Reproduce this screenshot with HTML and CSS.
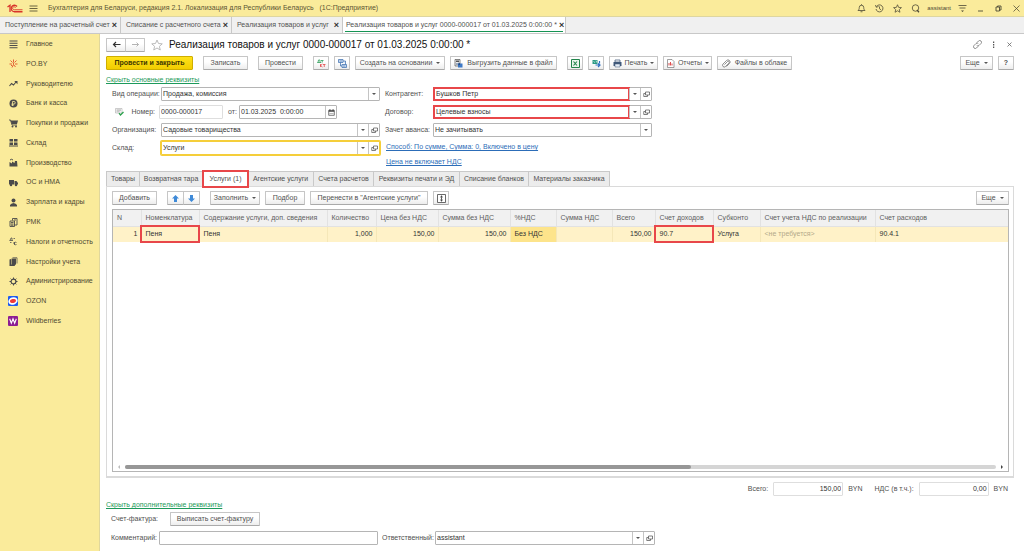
FILE: index.html
```html
<!DOCTYPE html>
<html lang="ru">
<head>
<meta charset="utf-8">
<title>Реализация товаров и услуг</title>
<link rel="stylesheet" href="styles.css">
</head>
<body>
<svg class="sprite" aria-hidden="true">
  <symbol id="open" viewBox="0 0 14 14"><path d="M5 2h8v6H5zM5 5H1.500v6H9V8" fill="none" stroke="#555" stroke-width="1.500"/></symbol>
  <symbol id="star" viewBox="0 0 24 24"><path d="M12 2l3 7 7.500.7-5.700 5 1.700 7.300L12 18l-6.500 4 1.700-7.300-5.700-5L9 9z" fill="none" stroke="currentColor" stroke-width="2" stroke-linejoin="round"/></symbol>
</svg>

<header class="topbar">
  <svg class="logo" viewBox="0 0 32 18"><g fill="none" stroke="#d8342b" stroke-width="2.600"><path d="M1 6l5-3.500V16"/><path d="M20 5a6.500 6.500 0 1 0-5 10.500h16"/><path d="M17 7.500a3 3 0 1 0-2 4h16" stroke-width="1.800"/></g></svg>
  <button class="icon-btn" aria-label="Меню"><svg class="ico" viewBox="0 0 18 18"><path d="M1 4h16M1 9h16M1 14h16" stroke="#6b6440" stroke-width="2"/></svg></button>
  <span class="app-title">Бухгалтерия для Беларуси, редакция 2.1. Локализация для Республики Беларусь &nbsp; (1С:Предприятие)</span>
  <div class="top-tools">
    <button class="icon-btn" aria-label="Уведомления"><svg class="ico" viewBox="0 0 18 18"><path d="M2 13c2-2 2.500-3 2.500-6a4.500 4.500 0 0 1 9 0c0 3 .5 4 2.500 6zM7 15.500h4M9 .5v2" fill="none" stroke="#4d4935" stroke-width="1.600"/></svg></button>
    <button class="icon-btn" aria-label="История"><svg class="ico" viewBox="0 0 18 18"><path d="M3 5a7 7 0 1 1-1 5M1 2l1.500 4.500L7 5M9 5v4.500l3 2" fill="none" stroke="#4d4935" stroke-width="1.600"/></svg></button>
    <button class="icon-btn" aria-label="Избранное"><svg class="ico"><use href="#star"/></svg></button>
    <button class="icon-btn" aria-label="Поиск"><svg class="ico" viewBox="0 0 18 18"><circle cx="9" cy="8" r="6.500" fill="none" stroke="#4d4935" stroke-width="1.600"/><path d="M12 12l4 4.500" stroke="#4d4935" stroke-width="2.500"/></svg></button>
    <span class="user">assistant</span>
    <button class="icon-btn" aria-label="Настройки"><svg class="ico" viewBox="0 0 18 18"><path d="M1 3h16M3 8h12" stroke="#4d4935" stroke-width="1.600"/><path d="M6 13h6l-3 3z" fill="#4d4935"/></svg></button>
    <button class="icon-btn" aria-label="Свернуть"><svg class="ico" viewBox="0 0 18 18"><path d="M4 14h10" stroke="#4d4935" stroke-width="1.800"/></svg></button>
    <button class="icon-btn" aria-label="Развернуть"><svg class="ico" viewBox="0 0 18 18"><path d="M4 6h7v8H4zM7 6V4h7v8h-3" fill="none" stroke="#4d4935" stroke-width="1.800"/></svg></button>
    <button class="icon-btn" aria-label="Закрыть"><svg class="ico" viewBox="0 0 18 18"><path d="M3 3l12 12M15 3L3 15" stroke="#4d4935" stroke-width="1.500"/></svg></button>
  </div>
</header>

<nav class="windows">
  <a href="#" class="w1">Поступление на расчетный счет<b>×</b></a>
  <a href="#" class="w2">Списание с расчетного счета<b>×</b></a>
  <a href="#" class="w2">Реализация товаров и услуг<b>×</b></a>
  <a href="#" class="w3 current">Реализация товаров и услуг 0000-000017 от 01.03.2025 0:00:00 *<b>×</b></a>
</nav>

<div class="shell">
  <nav class="sidebar">
    <ul>
      <li><a href="#"><svg class="ico" viewBox="0 0 18 18"><path d="M1 2h16M1 6.500h16M1 11h16M1 15.500h16" stroke="#4b4b4b" stroke-width="2.400"/></svg>Главное</a></li>
      <li><a href="#"><svg class="ico" viewBox="0 0 18 18"><path d="M9 1v5M3 3l4 4M15 3l-4 4M1 10h5M12 10h5M9 7v4l-3 6M9 11l4 5M4 14l2-2" stroke="#e2582f" stroke-width="1.900" fill="none"/></svg>PO.BY</a></li>
      <li><a href="#"><svg class="ico" viewBox="0 0 18 18"><path d="M1 14l4-5 4 3 5-6" fill="none" stroke="#4b4b4b" stroke-width="2.200"/><path d="M10.500 4H17v6.500z" fill="#4b4b4b"/></svg>Руководителю</a></li>
      <li><a href="#"><svg class="ico" viewBox="0 0 18 18"><circle cx="9" cy="9" r="8" fill="#4b4b4b"/><path d="M7 14V5h3a2.500 2.500 0 0 1 0 5H5M5 12h5" fill="none" stroke="#faeb9b" stroke-width="1.600"/></svg>Банк и касса</a></li>
      <li><a href="#"><svg class="ico" viewBox="0 0 18 18"><path d="M3 3h15l-2 7H6z" fill="#4b4b4b"/><path d="M0 2h3l3 10h10" fill="none" stroke="#4b4b4b" stroke-width="1.800"/><circle cx="7" cy="15" r="2" fill="#4b4b4b"/><circle cx="14" cy="15" r="2" fill="#4b4b4b"/></svg>Покупки и продажи</a></li>
      <li><a href="#"><svg class="ico" viewBox="0 0 18 18"><path d="M1 2h7v5H1zM10 2h7v5h-7zM1 9h7v5H1zM10 9h7v5h-7zM0 15h18v2H0z" fill="#4b4b4b"/></svg>Склад</a></li>
      <li><a href="#"><svg class="ico" viewBox="0 0 18 18"><path d="M1 17V8l5 3V7l5 3 1-4h4l1 11z" fill="#4b4b4b"/><path d="M2 4q3-3 6 0" fill="none" stroke="#4b4b4b" stroke-width="2"/></svg>Производство</a></li>
      <li><a href="#"><svg class="ico" viewBox="0 0 18 18"><path d="M0 4h10v9H0zM11 6h4l3 4v3h-7z" fill="#4b4b4b"/><circle cx="4" cy="14" r="2.500" fill="#4b4b4b"/><circle cx="14" cy="14" r="2.500" fill="#4b4b4b"/></svg>ОС и НМА</a></li>
      <li><a href="#"><svg class="ico" viewBox="0 0 18 18"><circle cx="9" cy="5" r="4" fill="#4b4b4b"/><path d="M2 17v-3q2-3 7-4 5 1 7 4v3z" fill="#4b4b4b"/></svg>Зарплата и кадры</a></li>
      <li><a href="#"><svg class="ico" viewBox="0 0 18 18"><path d="M2 6h9v11H2zM7 5V1h9v13h-5M4 9h5M4 12h5M4 14.500h5M10 4h4" fill="none" stroke="#4b4b4b" stroke-width="1.800"/></svg>РМК</a></li>
      <li><a href="#"><svg class="ico" viewBox="0 0 18 18"><path d="M2 7l2-5h2v5M1 7h7M9 3h3M8 12h4M11 10v6M15 11a2.500 2.500 0 1 0 0 4M2 11h3" fill="none" stroke="#4b4b4b" stroke-width="1.500"/></svg>Налоги и отчетность</a></li>
      <li><a href="#"><svg class="ico" viewBox="0 0 18 18"><path d="M1 5l3-1v11h9l-2 3H1zM5 3h9v12H5z" fill="#4b4b4b"/><path d="M7 1.500h9V13" fill="none" stroke="#4b4b4b" stroke-width="1.500"/></svg>Настройки учета</a></li>
      <li><a href="#"><svg class="ico" viewBox="0 0 18 18"><circle cx="9" cy="9" r="4.800" fill="none" stroke="#4b4b4b" stroke-width="2.400"/><path d="M9 1v3M9 14v3M1 9h3M14 9h3M3.300 3.300l2 2M12.700 12.700l2 2M3.300 14.700l2-2M12.700 5.300l2-2" stroke="#4b4b4b" stroke-width="2"/></svg>Администрирование</a></li>
      <li><a href="#"><svg class="ico brand" viewBox="0 0 18 18"><rect width="18" height="18" rx="2" fill="#1f5cf0"/><ellipse cx="9" cy="9" rx="8.500" ry="6.500" fill="#fff" transform="rotate(-20 9 9)"/><ellipse cx="9" cy="9" rx="5.500" ry="3.500" fill="#f03a3a" transform="rotate(-15 9 9)"/></svg>OZON</a></li>
      <li><a href="#"><svg class="ico brand" viewBox="0 0 18 18"><rect width="18" height="18" rx="2" fill="#8c1d93"/><path d="M3 5l3 8 3-8 3 8 3-8" fill="none" stroke="#fff" stroke-width="2"/></svg>Wildberries</a></li>
    </ul>
  </nav>

  <main class="doc">
    <div class="heading">
      <div class="pair">
        <button class="btn" aria-label="Назад"><svg class="ico" viewBox="0 0 18 18"><path d="M17 9H4M8 4L3 9l5 5" fill="none" stroke="#333" stroke-width="2.400"/></svg></button>
        <button class="btn" aria-label="Вперед"><svg class="ico" viewBox="0 0 18 18"><path d="M2 9h13M11 5l4 4-4 4" fill="none" stroke="#aaa" stroke-width="1.800"/></svg></button>
      </div>
      <svg class="fav"><use href="#star"/></svg>
      <h1>Реализация товаров и услуг 0000-000017 от 01.03.2025 0:00:00 *</h1>
      <div class="heading-tools">
        <button class="icon-btn" aria-label="Ссылка"><svg class="ico" viewBox="0 0 18 18"><path d="M8 5l3-3a3.300 3.300 0 0 1 5 5l-4 4a3.300 3.300 0 0 1-4.500 0M10 13l-3 3a3.300 3.300 0 0 1-5-5l4-4a3.300 3.300 0 0 1 4.500 0" fill="none" stroke="#555" stroke-width="1.300"/></svg></button>
        <button class="icon-btn" aria-label="Еще"><svg class="ico" viewBox="0 0 18 18"><path d="M8 3h2.500v3H8zM8 8h2.500v3H8zM8 13h2.500v3H8z" fill="#555"/></svg></button>
        <button class="icon-btn" aria-label="Закрыть"><svg class="ico" viewBox="0 0 18 18"><path d="M5 5l8 8M13 5l-8 8" stroke="#666" stroke-width="1.600"/></svg></button>
      </div>
    </div>

    <div class="commands">
      <button class="btn primary">Провести и закрыть</button>
      <button class="btn wide">Записать</button>
      <button class="btn wide">Провести</button>
      <div class="group">
        <button class="btn sq" aria-label="Движения"><svg class="ico" viewBox="0 0 18 18"><path d="M2 7l1-5h3v5M1 8V7h7v1M8 3h5M10.500 3v4" fill="none" stroke="#2f9e5b" stroke-width="1.600"/><path d="M7 10v6M11 10l-4 3 4 3M12 11h5M14.500 11v5" fill="none" stroke="#e04848" stroke-width="1.600"/></svg></button>
        <button class="btn sq" aria-label="Структура"><svg class="ico" viewBox="0 0 18 18"><path d="M1 1h9v6H1zM8 11h9v6H8zM5 7v7h3M10 4h5v7" fill="#dce8f8" stroke="#3d70b0" stroke-width="1.500"/><path d="M3 4h5M10 14h5" stroke="#3d70b0" stroke-width="1.500"/></svg></button>
        <button class="btn create">Создать на основании<i class="caret"></i></button>
        <button class="btn export"><svg class="ico" viewBox="0 0 18 18"><path d="M2 1h10v13H2z" fill="#eee" stroke="#555" stroke-width="1.400"/><path d="M4 3h6v3H4z" fill="#555"/><path d="M8 9h9v8H8z" fill="#3d79c6"/><path d="M4 10h7M9 8l3 2-3 2" fill="none" stroke="#173f77" stroke-width="1.500"/></svg>Выгрузить данные в файл</button>
      </div>
      <div class="group">
        <button class="btn sq" aria-label="Excel"><svg class="ico" viewBox="0 0 18 18"><path d="M1 1h16v16H1z" fill="#eaf6ee" stroke="#21834a" stroke-width="2"/><path d="M5 5l7 8M12 5l-7 8" stroke="#21834a" stroke-width="2.200"/></svg></button>
        <button class="btn sq" aria-label="Обмен"><svg class="ico" viewBox="0 0 18 18"><path d="M1 2h10v8H1z" fill="#2a9a83"/><path d="M3 4l3 4M7 4h2v3" stroke="#fff" fill="none"/><path d="M7 12h8M12 9l4 3-4 4M15 4v5" fill="none" stroke="#2e6fc0" stroke-width="2.400"/></svg></button>
        <button class="btn print"><svg class="ico" viewBox="0 0 18 18"><path d="M4 2h10v4H4z" fill="#fff" stroke="#40597a" stroke-width="1.500"/><path d="M1 6h16v8H1z" fill="#40597a"/><path d="M4 10h10v6H4z" fill="#e5edf6" stroke="#40597a"/></svg>Печать<i class="caret"></i></button>
        <button class="btn print"><svg class="ico" viewBox="0 0 18 18"><path d="M3 1h9l4 4v12H3z" fill="#fff" stroke="#777" stroke-width="1.400"/><path d="M6 13V8M9 13V6M12 13V9" stroke="#d44" stroke-width="1.900"/></svg>Отчеты<i class="caret"></i></button>
        <button class="btn files"><svg class="ico" viewBox="0 0 18 18"><path d="M5 11l6-6a2 2 0 0 1 3 3l-7 7a3.500 3.500 0 0 1-5-5l7-7a4 4 0 0 1 6 6l-6 6" fill="none" stroke="#666" stroke-width="1.400"/></svg>Файлы в облаке</button>
      </div>
      <div class="group end">
        <button class="btn more">Еще<i class="caret"></i></button>
        <button class="btn sq"><b>?</b></button>
      </div>
    </div>

    <a href="#" class="toggle">Скрыть основные реквизиты</a>

    <form class="fields">
      <div class="col">
        <div class="row"><label for="op">Вид операции:</label><div class="field drop"><select id="op"><option>Продажа, комиссия</option></select><i class="caret"></i></div></div>
        <div class="row">
          <label for="num" class="num-label"><svg class="ico" viewBox="0 0 18 18"><path d="M1 3h13v9H1z" fill="#fff" stroke="#999"/><path d="M3 5.500h9M3 7.500h9M3 9.500h6" stroke="#888"/><path d="M8 12l3 4 6-6" fill="none" stroke="#29a04a" stroke-width="2.500"/></svg>Номер:</label>
          <div class="field pale number"><input id="num" value="0000-000017"></div>
          <label for="date" class="from">от:</label>
          <div class="field date"><input id="date" value="01.03.2025  0:00:00"><button type="button" aria-label="Календарь"><svg class="mini" viewBox="0 0 10 10"><path d="M1 2h8v7H1z" fill="none" stroke="#444"/><path d="M1 2h8v2H1zM2 .500h1.500v2H2zM6.500.500H8v2H6.500z" fill="#444"/><path d="M2 6.500h6" stroke="#999"/></svg></button></div>
        </div>
        <div class="row"><label for="org">Организация:</label><div class="field"><input id="org" value="Садовые товарищества"><button type="button" aria-label="Выбрать"><i class="caret"></i></button><button type="button" aria-label="Открыть"><svg class="mini"><use href="#open"/></svg></button></div></div>
        <div class="row"><label for="wh">Склад:</label><div class="field focus"><input id="wh" value="Услуги"><button type="button" aria-label="Выбрать"><i class="caret"></i></button><button type="button" aria-label="Открыть"><svg class="mini"><use href="#open"/></svg></button></div></div>
      </div>
      <div class="col second">
        <div class="row"><label for="ka">Контрагент:</label><div class="field"><input id="ka" class="mark" value="Бушков Петр"><button type="button" aria-label="Выбрать"><i class="caret"></i></button><button type="button" aria-label="Открыть"><svg class="mini"><use href="#open"/></svg></button></div></div>
        <div class="row"><label for="dg">Договор:</label><div class="field"><input id="dg" class="mark" value="Целевые взносы"><button type="button" aria-label="Выбрать"><i class="caret"></i></button><button type="button" aria-label="Открыть"><svg class="mini"><use href="#open"/></svg></button></div></div>
        <div class="row"><label for="av">Зачет аванса:</label><div class="field drop"><select id="av"><option>Не зачитывать</option></select><i class="caret"></i></div></div>
        <div class="links"><a href="#">Способ: По сумме, Сумма: 0, Включено в цену</a><a href="#">Цена не включает НДС</a></div>
      </div>
    </form>

    <div class="tabs" role="tablist">
      <button role="tab" class="t1">Товары</button>
      <button role="tab" class="t2">Возвратная тара</button>
      <button role="tab" class="t3 active" aria-selected="true">Услуги (1)</button>
      <button role="tab" class="t4">Агентские услуги</button>
      <button role="tab" class="t5">Счета расчетов</button>
      <button role="tab" class="t6">Реквизиты печати и ЭД</button>
      <button role="tab" class="t7">Списание бланков</button>
      <button role="tab" class="t8">Материалы заказчика</button>
    </div>

    <section class="panel">
      <div class="commands">
        <button class="btn wide">Добавить</button>
        <div class="pair arrows">
          <button class="btn" aria-label="Вверх"><svg class="ico" viewBox="0 0 18 18"><path d="M9 2l7 7h-4v7H6V9H2z" fill="#3f8ad8"/></svg></button>
          <button class="btn" aria-label="Вниз"><svg class="ico" viewBox="0 0 18 18"><path d="M9 16l7-7h-4V2H6v7H2z" fill="#3f8ad8"/></svg></button>
        </div>
        <div class="group">
          <button class="btn fill">Заполнить<i class="caret"></i></button>
          <button class="btn pick">Подбор</button>
          <button class="btn move">Перенести в "Агентские услуги"</button>
          <button class="btn sq" aria-label="Высота строк"><svg class="ico" viewBox="0 0 18 18"><path d="M1 1h16v16H1z" fill="#fff" stroke="#444" stroke-width="1.600"/><path d="M9 3v4M9 11v4M6.500 6h5M6.500 12h5M9 4v3M9 11v3M8 9h2" fill="none" stroke="#444" stroke-width="1.800"/></svg></button>
        </div>
        <div class="group end"><button class="btn more">Еще<i class="caret"></i></button></div>
      </div>
      <div class="grid">
        <table>
          <colgroup><col class="c28"><col class="c58"><col class="c128"><col class="c49"><col class="c62"><col class="c72"><col class="c46"><col class="c56"><col class="c43"><col class="c58"><col class="c47"><col class="c115"><col></colgroup>
          <thead><tr><th>N</th><th>Номенклатура</th><th>Содержание услуги, доп. сведения</th><th>Количество</th><th>Цена без НДС</th><th>Сумма без НДС</th><th>%НДС</th><th>Сумма НДС</th><th>Всего</th><th>Счет доходов</th><th>Субконто</th><th>Счет учета НДС по реализации</th><th>Счет расходов</th></tr></thead>
          <tbody><tr><td class="r">1</td><td class="mark">Пеня</td><td>Пеня</td><td class="r">1,000</td><td class="r">150,00</td><td class="r">150,00</td><td class="hot">Без НДС</td><td></td><td class="r">150,00</td><td class="mark">90.7</td><td>Услуга</td><td class="dim">&lt;не требуется&gt;</td><td>90.4.1</td></tr></tbody>
        </table>
        <div class="scroll"><i class="left"></i><div class="track"><div class="thumb"></div></div><i class="right"></i></div>
      </div>
    </section>

    <div class="totals">
      <label for="sum">Всего:</label><div class="field pale"><input id="sum" value="150,00"></div><span>BYN</span>
      <label for="vat">НДС (в т.ч.):</label><div class="field pale"><input id="vat" value="0,00"></div><span>BYN</span>
    </div>

    <a href="#" class="toggle">Скрыть дополнительные реквизиты</a>
    <div class="invoice"><span>Счет-фактура:</span><button class="btn">Выписать счет-фактуру</button></div>
    <div class="bottom">
      <label for="com">Комментарий:</label><div class="field comment"><input id="com"></div>
      <label for="resp">Ответственный:</label><div class="field resp"><input id="resp" value="assistant"><button type="button" aria-label="Выбрать"><i class="caret"></i></button><button type="button" aria-label="Открыть"><svg class="mini"><use href="#open"/></svg></button></div>
    </div>
  </main>
</div>
</body>
</html>
```

FILE: styles.css
```css
* { box-sizing: border-box; }
body {
  margin: 0;
  min-height: 100vh;
  display: flex;
  flex-direction: column;
  background: #fff;
  color: #505050;
  font: 7px/10px "Liberation Sans", Arial, sans-serif;
}
button, input, select { font: inherit; color: inherit; margin: 0; padding: 0; }
a { color: inherit; text-decoration: none; }
ul { list-style: none; margin: 0; padding: 0; }
.sprite { position: absolute; width: 0; height: 0; }
.ico { width: 9px; height: 9px; flex: none; display: block; }
.mini { width: 7px; height: 7px; flex: none; display: block; }
.icon-btn { border: 0; background: none; color: #4d4935; display: block; }
.caret {
  flex: none;
  border: 2px solid transparent;
  border-top-color: #555;
  border-bottom: 0;
}

/* Application bar */
.topbar {
  display: flex;
  align-items: center;
  height: 17px;
  padding: 0 3px 0 7px;
  background: #faeb9b;
  border-bottom: 1px solid #ded6a0;
  color: #5b5534;
}
.logo { width: 16px; height: 9px; margin-right: 6px; }
.app-title { margin-left: 10px; white-space: nowrap; }
.top-tools { margin-left: auto; display: flex; align-items: center; gap: 9px; }
.user { font-size: 6px; color: #4d4935; margin: 0 -2px; }

/* Open windows */
.windows { display: flex; height: 17px; background: #f0f0f0; border-bottom: 1px solid #c8c8c8; }
.windows a {
  display: flex;
  align-items: center;
  justify-content: space-between;
  gap: 2px;
  padding: 0 3px 0 5px;
  border-right: 1px solid #c8c8c8;
  white-space: nowrap;
}
.windows b { font-size: 9px; color: #333; }
.w1 { width: 121px; }
.w2 { width: 111px; }
.w3 { width: 223px; }
.windows .current { padding: 0 2px 0 3px; background: linear-gradient(#159353, #159353) 2px 14px / calc(100% - 4px) 1px no-repeat #fff; }

.shell { flex: 1; display: flex; }

/* Sections */
.sidebar { flex: 0 0 100px; background: #faeb9b; border-right: 1px solid #e0d79c; color: #4f4a33; }
.sidebar ul { display: flex; flex-direction: column; justify-content: space-between; height: 297px; padding: 5px 0; }
.sidebar a { display: flex; align-items: center; gap: 8px; padding-left: 9px; white-space: nowrap; }
.sidebar .brand { width: 10px; height: 10px; margin: 0 0 0 -1px; }

/* Document */
.doc { flex: 1; min-width: 0; display: flex; flex-direction: column; padding: 3px 10px 6px 6px; }
.heading { display: flex; align-items: center; height: 15px; }
.btn {
  display: flex;
  align-items: center;
  justify-content: center;
  gap: 4px;
  height: 14px;
  padding: 0 4px;
  border: 1px solid #c6c6c6;
  border-bottom-color: #aaa;
  border-radius: 1px;
  background: linear-gradient(#fff 40%, #ededed);
  white-space: nowrap;
}
.pair { display: flex; }
.pair .btn { width: 20px; }
.pair .btn + .btn { margin-left: -1px; }
.pair.arrows .btn { width: 17px; }
.fav { width: 12px; height: 12px; margin: 0 6px; color: #bbb; }
h1 { margin: 0; font-size: 10px; line-height: 12px; font-weight: 400; color: #111; white-space: nowrap; }
.heading-tools { margin-left: auto; display: flex; gap: 7px; }

.commands { display: flex; align-items: center; gap: 10px; }
.heading + .commands { margin-top: 4px; }
.group { display: flex; gap: 5px; }
.end { margin-left: auto; }
.primary { width: 87px; background: linear-gradient(#ffe21a, #f2cd00); border-color: #cfae00; color: #3f3800; font-weight: 700; }
.wide { width: 45px; }
.sq { width: 16px; padding: 0; }
.create { width: 90px; }
.export { width: 107px; }
.print { width: 49px; gap: 3px; }
.files { width: 75px; }
.more { width: 33px; }
.fill { width: 50px; }
.pick { width: 40px; }
.move { width: 118px; }

.toggle { align-self: flex-start; color: #1d9a5b; text-decoration: underline; }
.commands + .toggle { margin-top: 5px; }

/* Fields */
.fields { display: flex; gap: 5px; padding-left: 6px; }
.col { width: 268px; }
.second { width: 267px; }
.row { display: flex; align-items: center; height: 18px; }
.row > label { flex: 0 0 49px; white-space: nowrap; }
.second .row > label { flex-basis: 48px; }
.field {
  flex: 1;
  min-width: 0;
  display: flex;
  align-items: stretch;
  height: 14px;
  border: 1px solid #b5b5b5;
  border-radius: 1px;
  background: #fff;
}
.field input, .field select {
  flex: 1;
  width: 100%;
  min-width: 0;
  border: 0;
  outline: 0;
  padding: 0 1px;
  background: none;
  color: #333;
  white-space: pre;
}
.field select { appearance: none; }
.field button { width: 11px; border: 0; border-left: 1px solid #c4c4c4; background: none; display: flex; align-items: center; justify-content: center; }
.drop { align-items: center; padding-right: 3px; background: linear-gradient(#c4c4c4, #c4c4c4) right 10px top 0 / 1px 100% no-repeat; }
.drop select { height: 100%; }
.pale { border-color: #dedede; }
.focus { box-shadow: 0 0 0 1px #f5ce3a; border-color: #f5ce3a; }
.field .mark { outline: 2px solid #e8474a; outline-offset: -1px; padding-left: 2px; }
.row > .num-label { display: flex; justify-content: space-between; flex-basis: 47px; padding: 0 4px 0 3px; }
.number { flex: 0 0 64px; }
.row > .from { flex: 0 0 16px; padding-left: 5px; }
.date { flex: 0 0 98px; }
.links { display: flex; flex-direction: column; align-items: flex-start; gap: 5px; padding: 3px 0 0 1px; color: #2c6db8; }
.links a { text-decoration: underline; }

/* Page tabs */
.tabs { display: flex; margin-top: 4px; }
.tabs button { height: 15px; border: 1px solid #c9c9c9; border-bottom: 0; border-left-width: 0; background: #ececec; white-space: nowrap; }
.tabs button:first-child { border-left-width: 1px; }
.tabs .active { background: #fff; border: 0; outline: 2px solid #e8474a; outline-offset: -1px; height: 16px; margin-bottom: -1px; position: relative; }
.t1 { width: 34px; }
.t2 { width: 63px; }
.t3 { width: 45px; }
.t4 { width: 66px; }
.t5 { width: 60px; }
.t6 { width: 86px; }
.t7 { width: 69px; }
.t8 { width: 81px; }

.panel { flex: 1; display: flex; flex-direction: column; gap: 4px; padding: 4px 4px 4px 5px; border: 1px solid #dadada; border-bottom-width: 2px; }
.grid { flex: 1; display: flex; flex-direction: column; border: 1px solid #b5b5b5; }
table { width: 100%; table-layout: fixed; border-collapse: collapse; }
th, td { height: 16px; padding: 0 4px; text-align: left; font-weight: 400; white-space: nowrap; border-right: 1px solid #e2e2e2; }
th { background: #f1f1f1; color: #606060; border-bottom: 1px solid #e2e2e2; }
td { background: #fff2c8; border-right-color: #f5e7b8; color: #333; }
th:last-child, td:last-child { border-right: 0; }
.r { text-align: right; padding-right: 3px; }
.hot { background: #fde48b; }
.dim { color: #b3a98a; }
td.mark { outline: 2px solid #e8474a; outline-offset: -1px; }
.c28 { width: 28px; }
.c58 { width: 58px; }
.c128 { width: 128px; }
.c49 { width: 49px; }
.c62 { width: 62px; }
.c72 { width: 72px; }
.c46 { width: 46px; }
.c56 { width: 56px; }
.c43 { width: 43px; }
.c47 { width: 47px; }
.c115 { width: 115px; }
.scroll { margin-top: auto; display: flex; align-items: center; gap: 5px; height: 8px; padding: 0 5px; }
.track { flex: 1; height: 4px; border-radius: 2px; background: #d5d5d5; }
.thumb { width: 65%; height: 4px; border-radius: 2px; background: #979797; }
.left, .right { border: 2px solid transparent; }
.left { border-left: 0; border-right-color: #bbb; }
.right { border-right: 0; border-left-color: #444; }

.totals { display: flex; align-items: center; justify-content: flex-end; gap: 5px; margin: 4px 6px 4px 0; }
.totals .field { flex: 0 0 70px; height: 14px; }
.totals input { text-align: right; }
.totals label { margin-left: 7px; }
.totals label:first-child { margin: 0; }
.invoice { display: flex; align-items: center; gap: 12px; padding: 2px 0 5px 5px; }
.invoice .btn { width: 90px; }
.bottom { display: flex; align-items: center; padding-left: 5px; }
.bottom label { flex: 0 0 48px; }
.bottom .comment { flex: 0 0 219px; margin-right: 4px; }
.bottom .comment + label { flex-basis: 53px; }
.bottom .resp { flex: 0 0 220px; }
```
